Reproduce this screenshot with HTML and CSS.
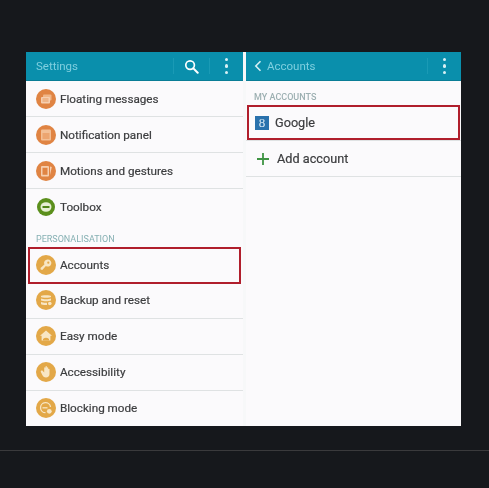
FILE: index.html
```html
<!DOCTYPE html>
<html lang="en">
<head>
    <meta charset="UTF-8">
    <meta name="viewport" content="width=device-width, initial-scale=1.0">
    <title>Settings - Accounts</title>
    <link rel="stylesheet" href="styles.css">
</head>
<body>
    <div class="screens">
        <!-- Left: settings list -->
        <section class="panel left">
            <header class="topbar">
                <span class="title">Settings</span>
                <i class="sep sep-a"></i>
                <svg class="search" viewBox="0 0 16 16" width="15" height="15"><circle cx="6.5" cy="6.5" r="4.6" fill="none" stroke="#fff" stroke-width="1.8"/><path d="M10 10l4.6 4.6" stroke="#fff" stroke-width="2.2" stroke-linecap="round"/></svg>
                <i class="sep sep-b"></i>
                <span class="dots"><b></b><b></b><b></b></span>
            </header>

            <div class="row">
                <span class="icon orange"><svg viewBox="0 0 20 20"><rect x="7" y="5.5" width="8.5" height="6" rx="1" fill="#f0b688"/><rect x="5" y="8" width="9" height="6.5" rx="1" fill="#f6cfb0"/><path d="M6.500 10h6M6.500 12h6" stroke="#e08443" stroke-width=".7"/></svg></span>
                <span class="label">Floating messages</span>
            </div>
            <div class="row">
                <span class="icon orange"><svg viewBox="0 0 20 20"><rect x="5" y="4.500" width="10" height="11" rx="1" fill="#f3bf95"/><rect x="6.500" y="8" width="7" height="6" fill="#eca570"/></svg></span>
                <span class="label">Notification panel</span>
            </div>
            <div class="row">
                <span class="icon orange"><svg viewBox="0 0 20 20"><rect x="5" y="5" width="8" height="10.500" rx="1" fill="#f6cfb0"/><path d="M14 5.500l1.800.6-1.800 8z" fill="#f6cfb0"/><rect x="6.500" y="6.800" width="5" height="7" fill="#e08443"/></svg></span>
                <span class="label">Motions and gestures</span>
            </div>
            <div class="row last">
                <span class="icon green"><svg viewBox="0 0 18 18"><ellipse cx="9" cy="9" rx="5.500" ry="4.800" fill="#e6efd2"/><rect x="5.500" y="8" width="7" height="2" fill="#4f8516"/></svg></span>
                <span class="label">Toolbox</span>
            </div>

            <h3 class="section">PERSONALISATION</h3>

            <div class="row marked">
                <span class="icon yellow"><svg viewBox="0 0 20 20"><path d="M11.800 4.600a3.500 3.500 0 1 1-1.900 6.400l-3.600 3.900-1.600-.3-.2-1.500 3.900-3.500a3.500 3.500 0 0 1 3.400-5z" fill="#f8e6c4"/><circle cx="12.300" cy="7.700" r="1.100" fill="#e3a848"/></svg></span>
                <span class="label">Accounts</span>
            </div>
            <div class="row">
                <span class="icon yellow"><svg viewBox="0 0 20 20"><path d="M5 7V6c0-1 10-1 10 0v1c0 1.100-10 1.100-10 0zM5 8.600c2 1 8 1 10 0v1.800c-2 1-8 1-10 0zM5 12c1.500.7 4 .9 6 .7V15c-2 .2-6-.2-6-1z" fill="#f8e6c4"/><circle cx="13.800" cy="13.500" r="1.800" fill="#f8e6c4"/></svg></span>
                <span class="label">Backup and reset</span>
            </div>
            <div class="row">
                <span class="icon yellow"><svg viewBox="0 0 20 20"><path d="M10 4.500l6 5.300h-1.600v4.700H5.600V9.800H4z" fill="#f8e6c4"/><path d="M7 13q3-2.500 6 0v1.500H7z" fill="#e3a848"/></svg></span>
                <span class="label">Easy mode</span>
            </div>
            <div class="row">
                <span class="icon yellow"><svg viewBox="0 0 20 20"><path d="M6.800 9l1.400 1.500V6c0-1 1.300-1 1.300 0V4.800c0-1 1.400-1 1.400 0v1c0-.9 1.300-.9 1.300 0v1.500c0-.8 1.300-.8 1.300 0v4.800c0 2.200-1.500 3.400-3.500 3.400-1.700 0-2.700-.8-3.400-2L4.800 10c-.5-1 1.200-2 2-1z" fill="#f8e6c4"/></svg></span>
                <span class="label">Accessibility</span>
            </div>
            <div class="row last">
                <span class="icon yellow"><svg viewBox="0 0 20 20"><path d="M14.500 9a5 5 0 1 0-5 5.700" fill="none" stroke="#f8e6c4" stroke-width="1.300"/><path d="M6.500 9.800h5" stroke="#f8e6c4" stroke-width="1.300"/><circle cx="13.300" cy="13.300" r="2.400" fill="#f8e6c4"/></svg></span>
                <span class="label">Blocking mode</span>
            </div>
        </section>

        <!-- Right: accounts -->
        <section class="panel right">
            <header class="topbar">
                <svg class="back" viewBox="0 0 8 12" width="8" height="12"><path d="M6.500 1.200L1.800 6l4.700 4.800" fill="none" stroke="#d5eef3" stroke-width="1.600"/></svg>
                <span class="title">Accounts</span>
                <i class="sep sep-c"></i>
                <span class="dots"><b></b><b></b><b></b></span>
            </header>

            <h3 class="section first">MY ACCOUNTS</h3>

            <div class="row account marked">
                <span class="gplus">8</span>
                <span class="label">Google</span>
            </div>
            <div class="row account add">
                <svg class="plus" viewBox="0 0 12 12" width="12" height="12"><path d="M6 0v12M0 6h12" stroke="#3f9444" stroke-width="1.800"/></svg>
                <span class="label">Add account</span>
            </div>
        </section>
    </div>

    <hr class="rule">
</body>
</html>
```
FILE: styles.css
```css
* {
    box-sizing: border-box;
}

body {
    margin: 0;
    height: 488px;
    overflow: hidden;
    background: #16181c;
    font-family: "Roboto", "Liberation Sans", sans-serif;
}

.screens {
    display: grid;
    grid-template-columns: 217px 215px;
    gap: 3px;
    width: 435px;
    height: 374px;
    margin: 52px 0 0 26px;
    background: #f7f8f9;
    filter: blur(0.35px);
}

.panel {
    background: #fbfafc;
    overflow: hidden;
}

.rule {
    height: 1px;
    margin: 24px 0 0;
    border: 0;
    background: #3a3a3c;
}

/* Top bar */
.topbar {
    display: flex;
    align-items: center;
    height: 29px;
    background: #0a8fac;
    border-bottom: 1px solid #0a7d96;
}

.title {
    font-size: 11.5px;
    color: #7fcfdf;
}

.left .title {
    margin-left: 10px;
}

.back {
    margin: 0 5px 0 8px;
}

.sep {
    width: 1px;
    height: 16px;
    background: #1a9ab5;
}

.sep-a {
    margin-left: auto;
    margin-right: 10px;
}

.search {
    margin-right: 10px;
}

.sep-b {
    margin-right: 15px;
}

.sep-c {
    margin-left: auto;
    margin-right: 15px;
}

.dots {
    display: flex;
    flex-direction: column;
    gap: 3px;
    margin-right: 15px;
}

.dots b {
    width: 3.5px;
    height: 3.5px;
    border-radius: 50%;
    background: #d8f0f4;
}

/* List rows */
.row {
    position: relative;
    display: flex;
    align-items: center;
    gap: 4px;
    height: 36px;
    padding-left: 10px;
    border-bottom: 1px solid #dfe2e3;
}

.row.last {
    border-bottom: none;
}

.left .marked ~ .row {
    padding-bottom: 2px;
}

.label {
    font-size: 11.7px;
    color: #3c3d3f;
    -webkit-text-stroke: 0.2px #3c3d3f;
}

.icon {
    flex: none;
    width: 20px;
    height: 20px;
    border-radius: 50%;
}

.icon svg {
    display: block;
    width: 100%;
    height: 100%;
}

.orange {
    background: #e08443;
}

.yellow {
    background: #e3a848;
}

.green {
    width: 18px;
    height: 18px;
    margin: 0 1px;
    background: #5b8f1c;
}

.section {
    margin: 0;
    padding: 9px 0 3px 10px;
    font-size: 9px;
    line-height: 10px;
    font-weight: 400;
    color: #86b0b3;
}

.section.first {
    padding: 11px 0 3px 8px;
    font-weight: 500;
    color: #9db0b2;
}

/* red highlight sits over the row */
.marked::after {
    content: "";
    position: absolute;
    inset: 0 2px -1px 2px;
    border: 2px solid #b01e2c;
}

.left .marked {
    border-bottom: none;
}

.account {
    padding-left: 9px;
}

.account .label {
    font-size: 12.7px;
}

.right .marked::after {
    inset: 0 1px 0 1px;
}

.gplus {
    width: 14px;
    height: 14px;
    margin-right: 2px;
    background: #2a72ad;
    color: #dcebf5;
    font: 13px/14px "Liberation Serif", serif;
    text-align: center;
}

.plus {
    margin: 0 4px 0 2px;
}
```
